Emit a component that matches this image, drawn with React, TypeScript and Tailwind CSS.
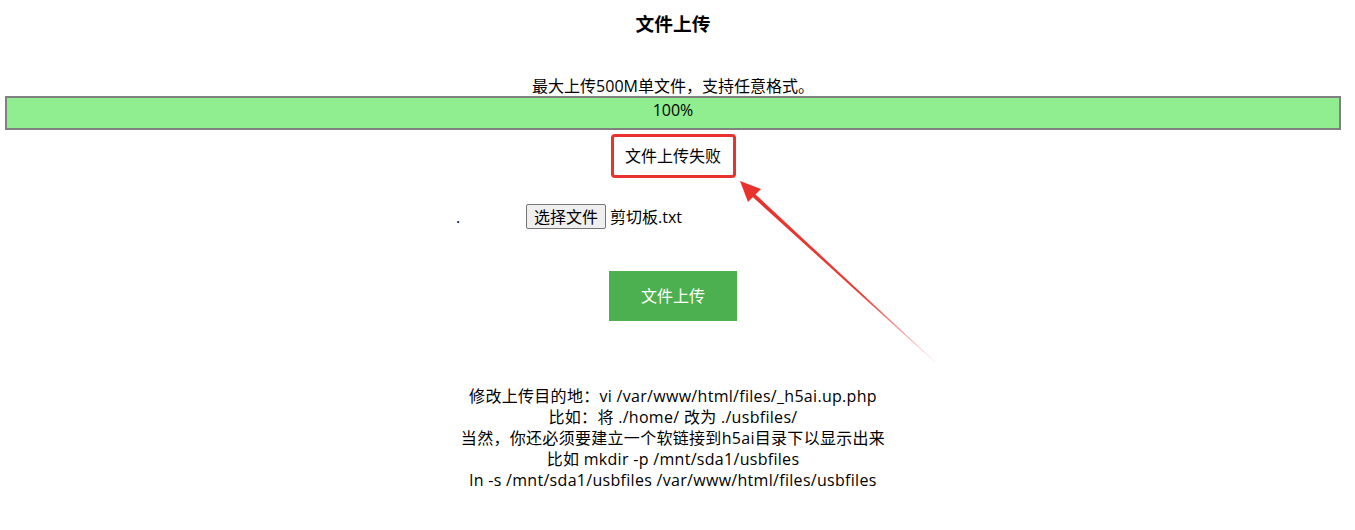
import React from 'react'

const notes = [
  '修改上传目的地：vi /var/www/html/files/_h5ai.up.php',
  '比如：将 ./home/ 改为 ./usbfiles/',
  '当然，你还必须要建立一个软链接到h5ai目录下以显示出来',
  '比如 mkdir -p /mnt/sda1/usbfiles',
  'ln -s /mnt/sda1/usbfiles /var/www/html/files/usbfiles',
]

const Arrow: React.FC = () => (
  <svg
    className="absolute left-0 top-0 pointer-events-none"
    width="1355"
    height="530"
    viewBox="0 0 1355 530"
  >
    <defs>
      <linearGradient id="fade" x1="752" y1="194" x2="935" y2="362" gradientUnits="userSpaceOnUse">
        <stop offset="0" stopColor="#e8322b" stopOpacity="1" />
        <stop offset="0.6" stopColor="#e8322b" stopOpacity="0.95" />
        <stop offset="1" stopColor="#e8322b" stopOpacity="0.1" />
      </linearGradient>
    </defs>
    <polygon points="740,181 761,189 748,202" fill="#e8322b" />
    <polygon points="750.8,195.3 753.4,192.5 935.2,361.8 934.8,362.2" fill="url(#fade)" />
  </svg>
)

const App: React.FC = () => {
  return (
    <div
      className="relative w-[1355px] h-[530px] bg-white text-black overflow-hidden"
      style={{ fontFamily: '"Open Sans", "Noto Sans CJK SC", sans-serif' }}
    >
      <div className="w-[1346px] text-center">
        <h3 className="mt-[10px] text-[18.72px] leading-[28px] font-bold">文件上传</h3>
        <p className="mt-[38px] text-[16px] leading-[20px]">最大上传500M单文件，支持任意格式。</p>
        <div className="mx-[5px] w-[1336px] h-[34px] border-2 border-[#808080] bg-[#90ee90] text-[16px] leading-[24px]">
          100%
        </div>
        <div className="mt-[4px] flex justify-center">
          <div className="w-[125px] h-[44px] border-[3px] border-[#e8322b] rounded-[4px] flex items-center justify-center text-[16px]">
            文件上传失败
          </div>
        </div>
        <div className="mt-[26px] flex justify-center items-center h-[25px] text-[16px]">
          <span className="w-[71px] text-left pl-[1px]">.</span>
          <div className="w-[365px] flex items-center text-left">
            <button className="h-[25px] px-[7px] border border-[#767676] rounded-[2px] bg-[#efefef] text-[16px] leading-[20px]">
              选择文件
            </button>
            <span className="ml-[4px]">剪切板.txt</span>
          </div>
        </div>
        <div className="mt-[42px] flex justify-center">
          <button className="w-[128px] h-[50px] bg-[#4caf50] text-white text-[16px]">文件上传</button>
        </div>
        <div className="mt-[65px] text-[16px] leading-[21px] tracking-[0.3px]">
          {notes.map((line, i) => (
            <div key={i}>{line}</div>
          ))}
        </div>
      </div>
      <Arrow />
    </div>
  )
}

export default App
